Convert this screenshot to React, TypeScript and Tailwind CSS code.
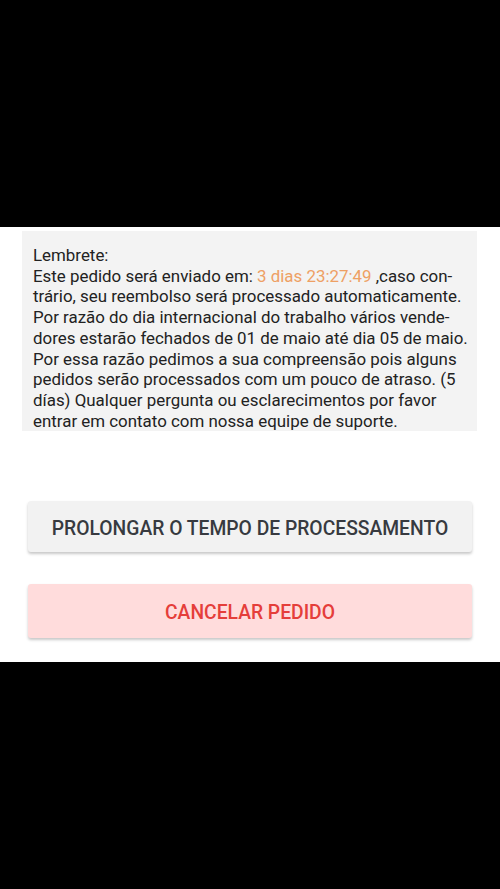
export default function App() {
    const lines = [
        "trário, seu reembolso será processado automaticamente.",
        "Por razão do dia internacional do trabalho vários vende-",
        "dores estarão fechados de 01 de maio até dia 05 de maio.",
        "Por essa razão pedimos a sua compreensão pois alguns",
        "pedidos serão processados com um pouco de atraso. (5",
        "días) Qualquer pergunta ou esclarecimentos por favor",
        "entrar em contato com nossa equipe de suporte.",
    ];

    return (
        <div className="flex flex-col w-[500px] h-[889px] bg-black font-['Roboto',sans-serif]">
            <div className="h-[227px]" />
            <div className="flex flex-col bg-white h-[435px] pt-[4px]">
                <div className="mx-[22px] w-[455px] h-[200px] bg-[#f3f3f3] px-[11px] pt-[14px] text-[16.9px] leading-[20.7px] text-[#222] whitespace-nowrap">
                    <p>Lembrete:</p>
                    <p>
                        Este pedido será enviado em: <span className="text-[#eea064]">3 dias 23:27:49</span> ,caso con-
                    </p>
                    {lines.map((line) => (
                        <p key={line}>{line}</p>
                    ))}
                </div>
                <div className="flex flex-col gap-[32px] px-[28px] mt-[70px]">
                    <button className="h-[51px] pt-[5px] rounded-[3px] bg-[#f2f2f2] shadow-[0_2px_3px_rgba(0,0,0,0.22)] text-[19.3px] font-medium text-[#373a40]">
                        PROLONGAR O TEMPO DE PROCESSAMENTO
                    </button>
                    <button className="h-[54px] pt-[5px] rounded-[3px] bg-[#ffdcdc] shadow-[0_2px_3px_rgba(0,0,0,0.22)] text-[19.3px] font-medium text-[#e53e3a]">
                        CANCELAR PEDIDO
                    </button>
                </div>
            </div>
        </div>
    );
}
